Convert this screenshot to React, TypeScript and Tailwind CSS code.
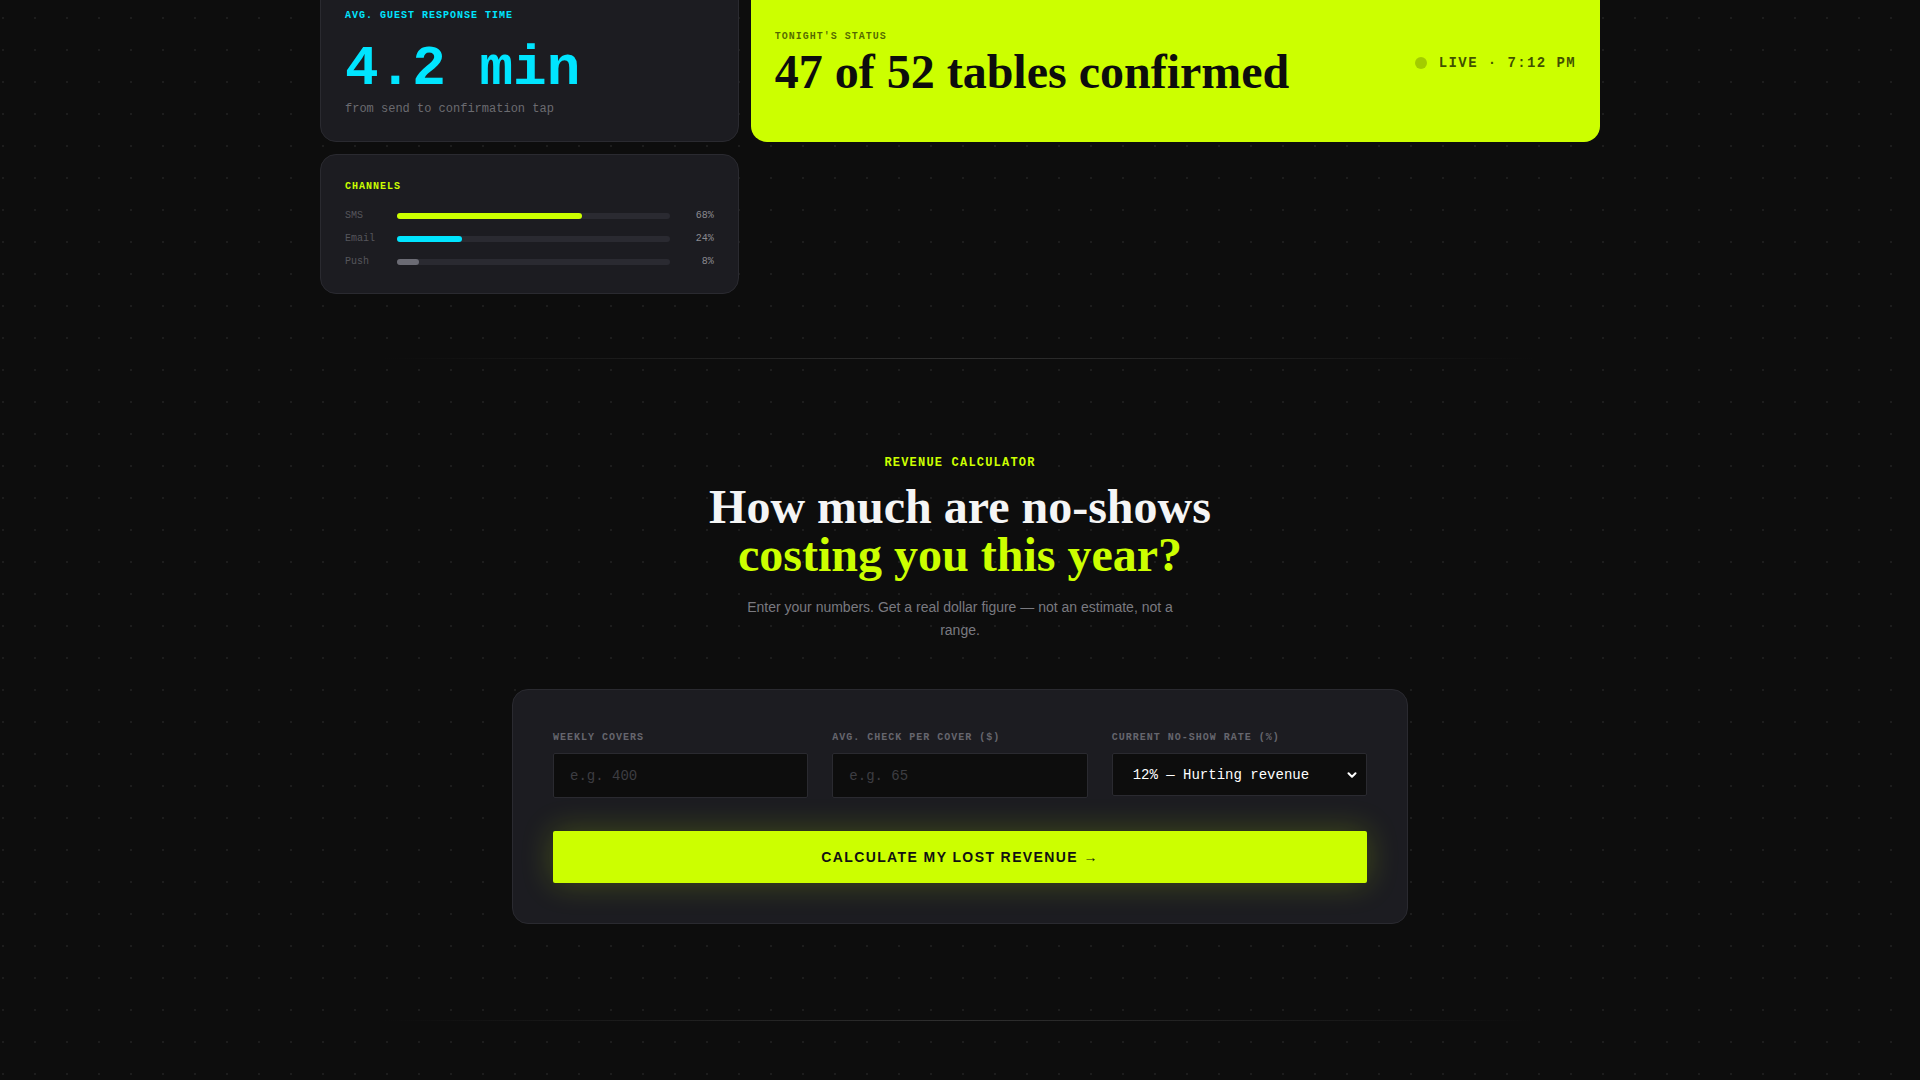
import { ChevronDown } from "lucide-react";

const mono = "font-['Liberation_Mono','DejaVu_Sans_Mono',monospace]";
const serif = "font-['Liberation_Serif','Times_New_Roman',serif]";
const sans = "font-['Liberation_Sans',Arial,sans-serif]";

const channels = [
  { name: "SMS", pct: 68, bar: "bg-[#ccff00]" },
  { name: "Email", pct: 24, bar: "bg-[#00e5ff]" },
  { name: "Push", pct: 8, bar: "bg-[#6b6b74]" },
];

function Divider() {
  return (
    <div className="mx-auto h-px max-w-6xl bg-linear-to-r from-transparent via-[#2f2f2f] to-transparent" />
  );
}

function Field({ label, placeholder }: { label: string; placeholder: string }) {
  return (
    <label className="flex flex-col">
      <span className={`${mono} mb-2 text-[10px] leading-[15px] font-bold tracking-[0.1em] text-[#66666e] uppercase`}>
        {label}
      </span>
      <input
        type="text"
        placeholder={placeholder}
        className={`${mono} h-[45px] w-full rounded-[2px] border border-[#2a2a30] bg-[#0d0d0d] px-4 text-sm text-white outline-none placeholder:text-[#3d3d42]`}
      />
    </label>
  );
}

export default function App() {
  return (
    <div className="min-h-screen overflow-hidden bg-[#0d0d0d] bg-[radial-gradient(circle,#1d1d1d_1.2px,transparent_1.5px)] bg-[size:32px_32px] bg-[position:-13px_2px]">
      {/* Stats bento */}
      <div className="mx-auto -mt-[17px] max-w-7xl pb-16">
        <div className="grid grid-cols-3 gap-3">
          <div className="rounded-2xl border border-[#2a2a30] bg-[#1c1c21] p-6">
            <div className={`${mono} text-[10px] leading-[15px] font-bold tracking-[0.1em] text-[#00e5ff]`}>
              AVG. GUEST RESPONSE TIME
            </div>
            <div className={`${mono} mt-[18px] text-[56px] leading-none font-bold text-[#00e5ff]`}>4.2 min</div>
            <div className={`${mono} mt-1 text-xs leading-4 text-[#6b6b70]`}>from send to confirmation tap</div>
          </div>

          <div className="col-span-2 flex items-center justify-between rounded-2xl bg-[#ccff00] px-6">
            <div>
              <div className={`${mono} text-[10px] leading-[15px] font-bold tracking-[0.1em] text-black/60`}>
                TONIGHT'S STATUS
              </div>
              <div className={`${serif} mt-1 text-5xl leading-none font-bold text-[#0d0d0d]`}>
                47 of 52 tables confirmed
              </div>
            </div>
            <div className="flex items-center gap-3">
              <span className="h-3 w-3 rounded-full bg-black/20" />
              <span className={`${mono} text-sm font-bold tracking-[0.1em] text-black/70`}>LIVE · 7:12 PM</span>
            </div>
          </div>

          <div className="rounded-2xl border border-[#2a2a30] bg-[#1c1c21] p-6">
            <div className={`${mono} mb-3.5 text-[10px] leading-[15px] font-bold tracking-[0.1em] text-[#ccff00]`}>
              CHANNELS
            </div>
            <div className="flex flex-col gap-2">
              {channels.map((c) => (
                <div key={c.name} className={`${mono} flex items-center text-[10px] leading-[15px]`}>
                  <span className="w-[52px] text-[#56565c]">{c.name}</span>
                  <div className="h-1.5 flex-1 rounded-full bg-[#2a2a31]">
                    <div className={`h-full rounded-full ${c.bar}`} style={{ width: `${c.pct}%` }} />
                  </div>
                  <span className="w-11 text-right text-[#8a8a90]">{c.pct}%</span>
                </div>
              ))}
            </div>
          </div>
        </div>
      </div>

      <Divider />

      {/* Revenue calculator */}
      <section className="px-6 pt-24 pb-24 text-center">
        <div className={`${mono} mb-3 text-xs leading-4 font-bold tracking-[0.1em] text-[#ccff00]`}>
          REVENUE CALCULATOR
        </div>
        <h2 className={`${serif} text-5xl leading-none font-bold text-[#f5f5f5]`}>
          How much are no-shows
          <br />
          <span className="text-[#ccff00]">costing you this year?</span>
        </h2>
        <p className={`${sans} mx-auto mt-[17px] max-w-md text-sm leading-[22.5px] text-[#7a7a80]`}>
          Enter your numbers. Get a real dollar figure — not an estimate, not a range.
        </p>

        <div className="mx-auto mt-12 max-w-4xl rounded-2xl border border-[#2a2a30] bg-[#1c1c21] p-10 text-left">
          <div className="grid grid-cols-3 gap-6">
            <Field label="Weekly covers" placeholder="e.g. 400" />
            <Field label="Avg. check per cover ($)" placeholder="e.g. 65" />
            <label className="flex flex-col">
              <span className={`${mono} mb-2 text-[10px] leading-[15px] font-bold tracking-[0.1em] text-[#66666e] uppercase`}>
                Current no-show rate (%)
              </span>
              <div className="relative">
                <select
                  defaultValue="12"
                  className={`${mono} h-[43px] w-full appearance-none rounded-[2px] border border-[#2a2a30] bg-[#0d0d0d] pl-5 pr-8 text-sm text-white outline-none`}
                >
                  <option value="5">5% — Industry best</option>
                  <option value="8">8% — Average</option>
                  <option value="12">12% — Hurting revenue</option>
                  <option value="20">20% — Critical</option>
                </select>
                <ChevronDown
                  className="pointer-events-none absolute top-1/2 right-2 h-3.5 w-3.5 -translate-y-1/2 text-white"
                  strokeWidth={3.5}
                />
              </div>
            </label>
          </div>

          <button
            type="button"
            className={`${sans} mt-[33px] h-[52px] w-full rounded-[2px] bg-[#ccff00] text-sm font-bold tracking-[0.1em] text-[#111111] shadow-[0_0_32px_rgba(204,255,0,0.22)]`}
          >
            CALCULATE MY LOST REVENUE →
          </button>
        </div>
      </section>

      <Divider />
      <div className="h-24" />
    </div>
  );
}
